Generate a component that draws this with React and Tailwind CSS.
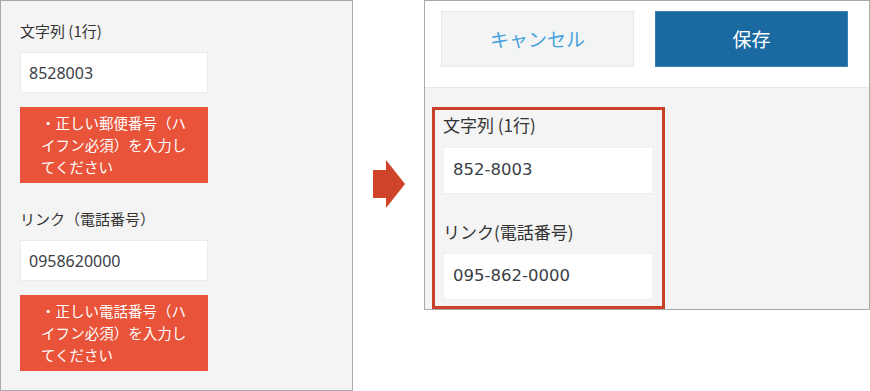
import React from 'react';

const jp = { fontFamily: '"Noto Sans CJK JP", sans-serif' };

const ErrorBox = ({ lines }) => (
  <div className="mt-[14px] w-[188px] h-[76px] bg-[#e8533a] pl-[21px] pt-[5px] text-[14.5px] leading-[22px] text-white">
    {lines.map((l, i) => (
      <div key={i} className="whitespace-nowrap">{l}</div>
    ))}
  </div>
);

const LeftInput = ({ value }) => (
  <div
    className="w-[188px] h-[41px] bg-white border border-[#ebebeb] pl-[8px] flex items-center text-[16px] text-[#3b4046]"
    style={{ fontFamily: '"Noto Sans", sans-serif' }}
  >
    {value}
  </div>
);

const RightInput = ({ value }) => (
  <div
    className="w-[210px] h-[47px] bg-white border border-dotted border-[#e2e2e2] pl-[9px] flex items-center text-[16.5px] text-[#3b4046]"
    style={{ fontFamily: '"DejaVu Sans", "Noto Sans CJK JP", sans-serif' }}
  >
    {value}
  </div>
);

const App = () => {
  return (
    <div className="w-[870px] h-[391px] bg-white flex items-start" style={jp}>
      {/* before */}
      <div className="w-[353px] h-[391px] shrink-0 bg-[#f4f4f4] border border-[#a9a9a9] pl-[19px] pt-[20px]">
        <p className="text-[15px] leading-[20px] text-[#333]">文字列 (1行)</p>
        <div className="mt-[11px]">
          <LeftInput value="8528003" />
        </div>
        <ErrorBox lines={['・正しい郵便番号（ハ', 'イフン必須）を入力し', 'てください']} />

        <p className="mt-[26px] text-[15px] leading-[20px] text-[#333]">リンク（電話番号）</p>
        <div className="mt-[11px]">
          <LeftInput value="0958620000" />
        </div>
        <ErrorBox lines={['・正しい電話番号（ハ', 'イフン必須）を入力し', 'てください']} />
      </div>

      {/* arrow */}
      <div className="w-[71px] shrink-0 flex justify-center pt-[160px]">
        <svg width="32" height="48" viewBox="0 0 32 48">
          <polygon points="0,10 13,10 13,0 32,24 13,48 13,38 0,38" fill="#cf4429" />
        </svg>
      </div>

      {/* after */}
      <div className="w-[446px] h-[310px] shrink-0 border border-[#a9a9a9] bg-[#f4f4f4] overflow-hidden">
        <div className="h-[87px] bg-white border-b border-[#e8e8e8] pl-[16px] pt-[10px] flex gap-[21px]">
          <button className="w-[193px] h-[56px] bg-[#f3f5f5] border border-dotted border-[#d9dede] text-[19px] text-[#45a1dc]">
            キャンセル
          </button>
          <button className="w-[193px] h-[56px] bg-[#1a6aa1] border border-[#3a80b0] text-[19px] text-white">
            保存
          </button>
        </div>
        <div className="pl-[7px] pt-[19px]">
          <div className="w-[233px] h-[202px] border-[3px] border-[#c9402b] pl-[8px] pt-[3px]">
            <p className="text-[17px] leading-[24px] text-[#333]">文字列 (1行)</p>
            <div className="mt-[10px]">
              <RightInput value="852-8003" />
            </div>
            <p className="mt-[26px] text-[17px] leading-[24px] text-[#333]">リンク(電話番号)</p>
            <div className="mt-[9px]">
              <RightInput value="095-862-0000" />
            </div>
          </div>
        </div>
      </div>
    </div>
  );
};

export default App;
